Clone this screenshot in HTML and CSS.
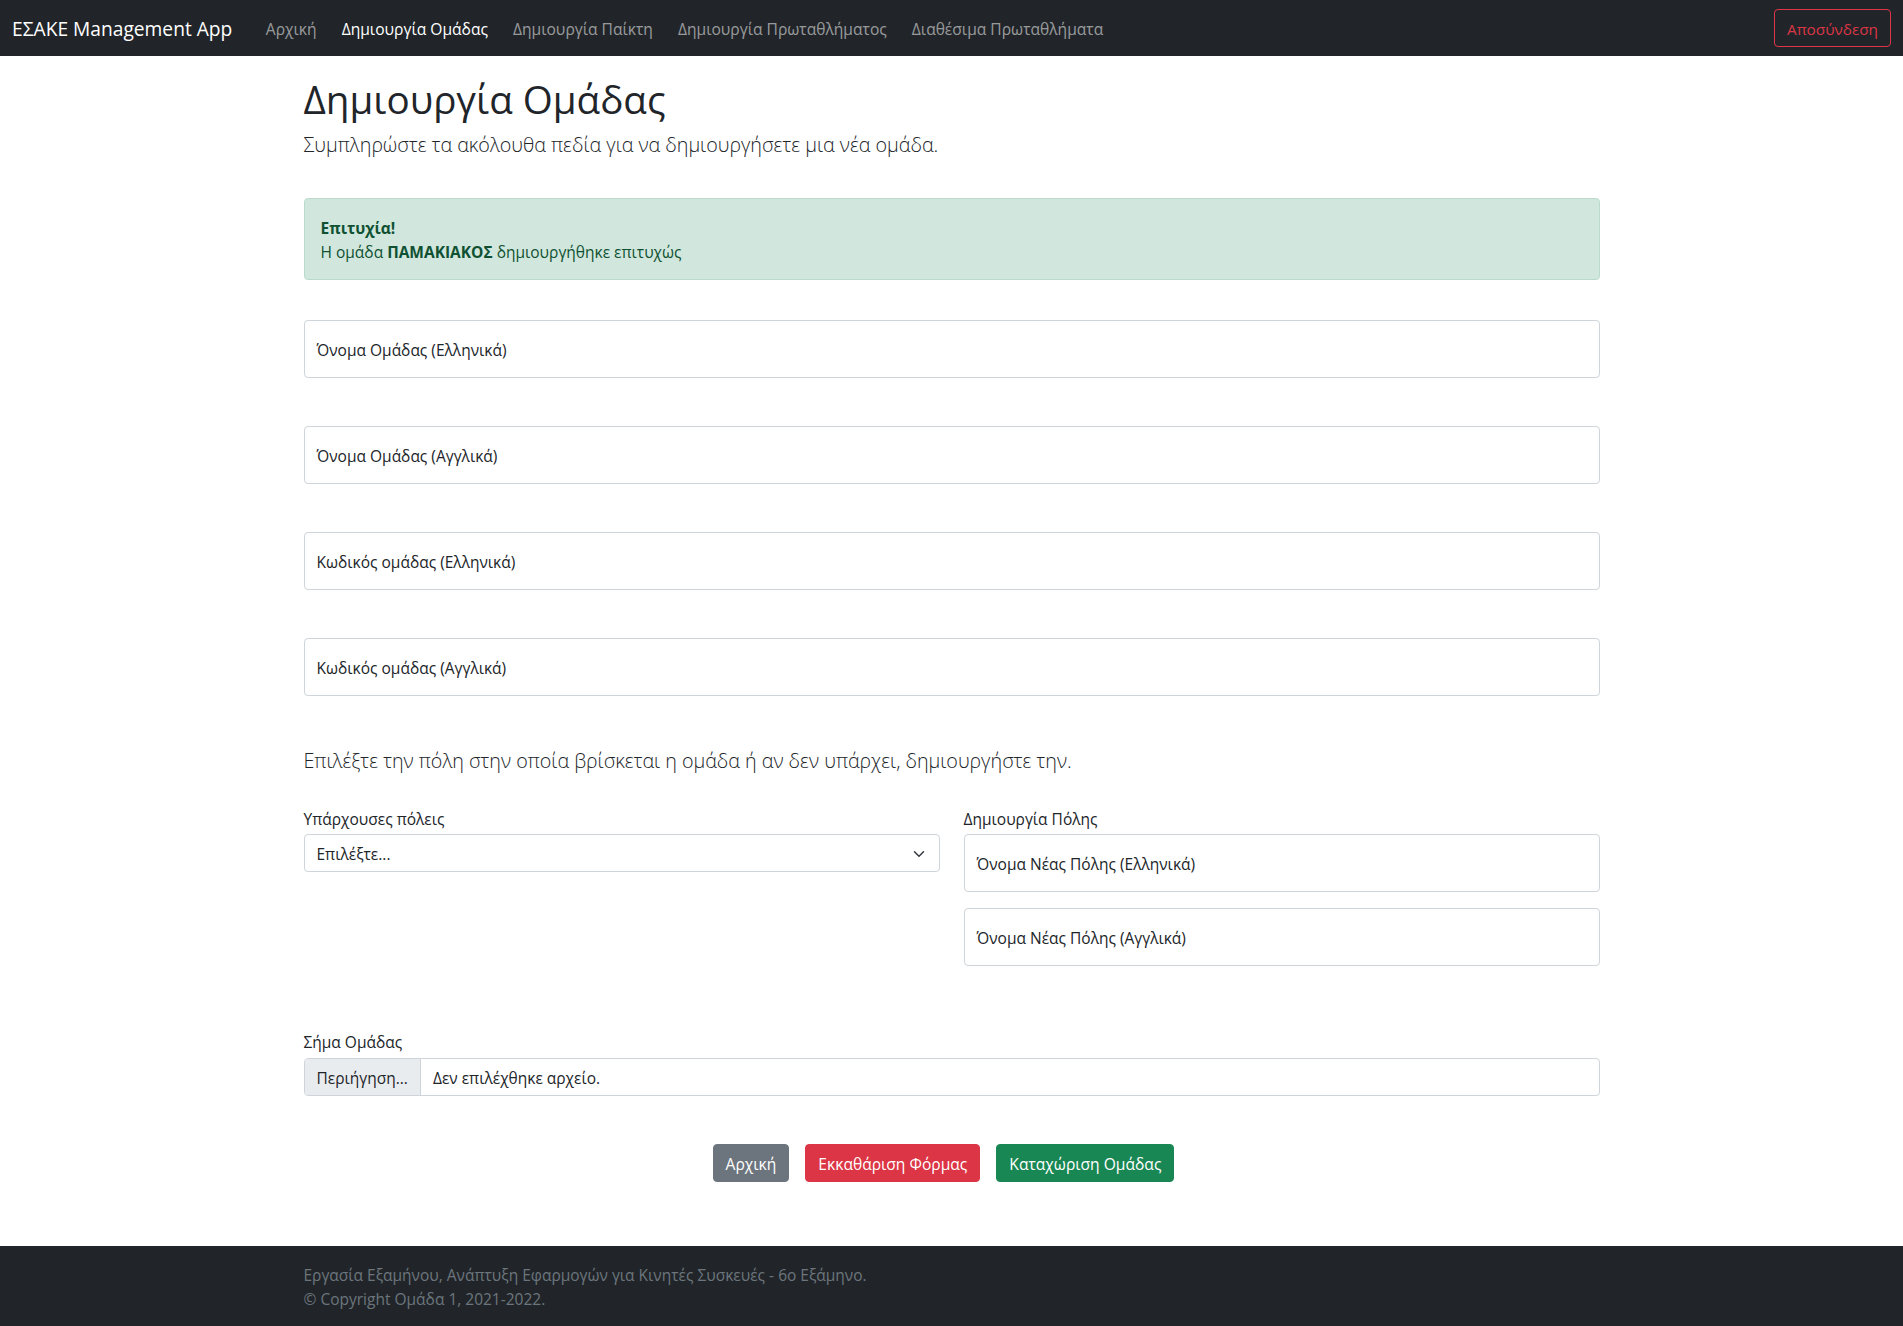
FILE: index.html
```html
<!DOCTYPE html>
<html lang="el">
<head>
<meta charset="utf-8">
<title>Δημιουργία Ομάδας</title>
<link rel="stylesheet" href="styles.css">
</head>
<body>
<nav class="navbar">
  <a class="brand" href="#">ΕΣΑΚΕ Management App</a>
  <ul class="nav-links">
    <li><a class="nav-link" href="#">Αρχική</a></li>
    <li><a class="nav-link active" href="#">Δημιουργία Ομάδας</a></li>
    <li><a class="nav-link" href="#">Δημιουργία Παίκτη</a></li>
    <li><a class="nav-link" href="#">Δημιουργία Πρωταθλήματος</a></li>
    <li><a class="nav-link" href="#">Διαθέσιμα Πρωταθλήματα</a></li>
  </ul>
  <button class="btn btn-outline-danger" type="button">Αποσύνδεση</button>
</nav>

<main class="container">
  <h1 class="page-title">Δημιουργία Ομάδας</h1>
  <p class="lead intro">Συμπληρώστε τα ακόλουθα πεδία για να δημιουργήσετε μια νέα ομάδα.</p>

  <div class="alert-success">
    <strong>Επιτυχία!</strong><br>
    Η ομάδα <strong>ΠΑΜΑΚΙΑΚΟΣ</strong> δημιουργήθηκε επιτυχώς
  </div>

  <form class="team-form">
    <div class="floating spaced"><span class="floating-label">Όνομα Ομάδας (Ελληνικά)</span></div>
    <div class="floating spaced"><span class="floating-label">Όνομα Ομάδας (Αγγλικά)</span></div>
    <div class="floating spaced"><span class="floating-label">Κωδικός ομάδας (Ελληνικά)</span></div>
    <div class="floating spaced"><span class="floating-label">Κωδικός ομάδας (Αγγλικά)</span></div>

    <p class="lead section-lead">Επιλέξτε την πόλη στην οποία βρίσκεται η ομάδα ή αν δεν υπάρχει, δημιουργήστε την.</p>

    <div class="city-row">
      <div class="city-col">
        <div class="form-label">Υπάρχουσες πόλεις</div>
        <div class="select-box">
          <span>Επιλέξτε...</span>
          <svg class="chevron" width="16" height="12" viewBox="0 0 16 16"><path d="m2 5 6 6 6-6" fill="none" stroke="#343a40" stroke-width="2" stroke-linecap="round" stroke-linejoin="round"/></svg>
        </div>
      </div>
      <div class="city-col">
        <div class="form-label">Δημιουργία Πόλης</div>
        <div class="floating small-gap"><span class="floating-label">Όνομα Νέας Πόλης (Ελληνικά)</span></div>
        <div class="floating"><span class="floating-label">Όνομα Νέας Πόλης (Αγγλικά)</span></div>
      </div>
    </div>

    <div class="file-group">
      <div class="form-label">Σήμα Ομάδας</div>
      <div class="file-input">
        <span class="file-btn">Περιήγηση...</span>
        <span class="file-name">Δεν επιλέχθηκε αρχείο.</span>
      </div>
    </div>

    <div class="actions">
      <button class="btn btn-secondary" type="button">Αρχική</button>
      <button class="btn btn-danger" type="button">Εκκαθάριση Φόρμας</button>
      <button class="btn btn-success" type="button">Καταχώριση Ομάδας</button>
    </div>
  </form>
</main>

<footer class="footer">
  <div class="footer-inner">
    Εργασία Εξαμήνου, Ανάπτυξη Εφαρμογών για Κινητές Συσκευές - 6ο Εξάμηνο.<br>
    © Copyright Ομάδα 1, 2021-2022.
  </div>
</footer>
</body>
</html>
```

FILE: styles.css
```css
* { box-sizing: border-box; }

html, body { margin: 0; padding: 0; }

body {
  font-family: "Open Sans", "Noto Sans", sans-serif;
  font-size: 15.5px;
  line-height: 24px;
  color: #212529;
  background: #fff;
  min-height: 100vh;
  display: flex;
  flex-direction: column;
}

/* navbar */
.navbar {
  background: #212529;
  height: 56px;
  display: flex;
  align-items: center;
  padding: 0 12px;
}
.brand {
  color: #fff;
  text-decoration: none;
  font-size: 19.2px;
  line-height: 30px;
  padding-top: 2px;
  margin-right: 21px;
}
.nav-links {
  list-style: none;
  margin: 0;
  padding: 0;
  display: flex;
  flex: 1;
}
.nav-link {
  display: block;
  padding: 9px 12.5px 7px;
  color: rgba(255,255,255,.55);
  text-decoration: none;
  font-size: 15.6px;
}
.nav-link.active { color: #fff; }

.btn {
  font-family: inherit;
  font-size: 15.6px;
  line-height: 24px;
  padding: 7px 12px 5px;
  border-radius: 4px;
  border: 1px solid transparent;
  cursor: pointer;
}
.btn-outline-danger {
  background: transparent;
  color: #dc3545;
  border-color: #dc3545;
  font-size: 15.3px;
}
.btn-secondary { background: #6c757d; border-color: #6c757d; color: #fff; }
.btn-danger { background: #dc3545; border-color: #dc3545; color: #fff; }
.btn-success { background: #198754; border-color: #198754; color: #fff; }

/* main */
.container {
  flex: 1;
  width: 100%;
  max-width: 1320px;
  margin: 0 auto;
  padding: 19px 12px 0;
}
.page-title {
  font-size: 38.6px;
  font-weight: 400;
  line-height: 48px;
  margin: 0 0 7px;
}
.lead {
  font-size: 19.7px;
  font-weight: 300;
  line-height: 30px;
  margin: 0;
}
.intro { margin-bottom: 38px; }

.alert-success {
  background: #d1e7dd;
  border: 1px solid #badbcc;
  color: #0f5132;
  border-radius: 4px;
  padding: 17px 16px 15px;
  margin-bottom: 40px;
}
.alert-success strong { font-weight: 700; }

.floating {
  height: 58px;
  border: 1px solid #ced4da;
  border-radius: 4px;
  display: flex;
  align-items: center;
  padding: 2px 12px 0;
  background: #fff;
}
.floating.spaced { margin-bottom: 48px; }
.floating.small-gap { margin-bottom: 16px; }
.floating-label { color: #212529; }

.section-lead { margin: 0 0 30px; padding-top: 2px; }

.city-row {
  display: flex;
  gap: 24px;
}
.city-col { flex: 1; min-width: 0; }
.form-label { margin-bottom: 4px; padding-top: 1px; }
.city-row .form-label { margin-bottom: 3px; }

.select-box {
  height: 38px;
  border: 1px solid #ced4da;
  border-radius: 4px;
  display: flex;
  align-items: center;
  justify-content: space-between;
  padding: 1px 12px 0;
}
.chevron { display: block; }

.file-group { margin-top: 63px; }
.file-input {
  height: 38px;
  border: 1px solid #ced4da;
  border-radius: 4px;
  display: flex;
  overflow: hidden;
}
.file-btn {
  background: #e9ecef;
  border-right: 1px solid #ced4da;
  padding: 7px 12px 5px;
  line-height: 24px;
}
.file-name {
  padding: 7px 12px 5px;
  line-height: 24px;
}

.actions {
  display: flex;
  justify-content: center;
  gap: 16px;
  padding-right: 16px;
  margin: 48px 0 60px;
}

/* footer */
.footer {
  background: #212529;
  color: #6c757d;
}
.footer-inner {
  max-width: 1320px;
  margin: 0 auto;
  padding: 17px 12px 15px;
}
```
